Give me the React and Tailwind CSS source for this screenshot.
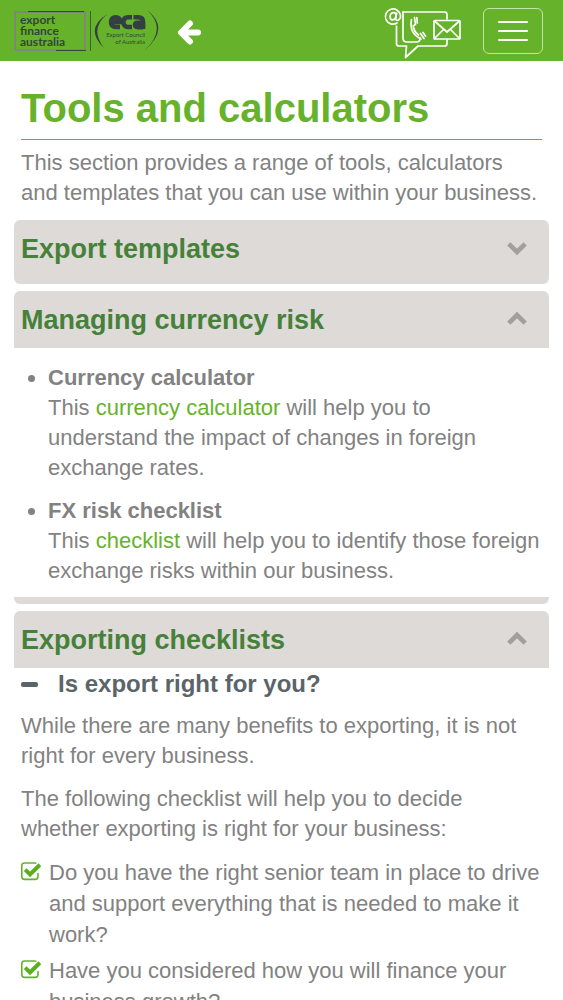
import React, { useState } from 'react'

const CHECKLIST = [
  'Do you have the right senior team in place to drive and support everything that is needed to make it work?',
  'Have you considered how you will finance your business growth?',
]

const ChevronIcon = ({ open }) => (
  <svg className="w-5 h-5 shrink-0" viewBox="0 0 20 20" fill="none" stroke="#a29f9c" strokeWidth="4.6" aria-hidden="true">
    <path d={open ? 'M1.8 13.200 10 5l8.200 8.200' : 'M1.8 4.800 10 13l8.200-8.200'} />
  </svg>
)

const CheckIcon = () => (
  <svg className="w-5 h-5 mt-[5px] shrink-0" viewBox="0 0 20 20" fill="none" aria-hidden="true">
    <path d="M15.5 1.4Q14.8 1 13.8 1H3.6Q.8 1 .8 3.6v11Q.8 17.400 3.600 17.400h10.600q2.800 0 2.800-2.800v-3.600" stroke="#66b32b" strokeWidth="1.6" />
    <path d="m4.200 7.600 4.800 4.800 9.900-9.600" stroke="#5aaf1e" strokeWidth="4" />
  </svg>
)

const ContactIcon = () => (
  <svg className="w-[90px] h-[60px]" viewBox="0 -3 90 60" fill="none" stroke="white" strokeWidth="1.7" strokeLinejoin="round" strokeLinecap="round" aria-hidden="true">
    {/* at sign */}
    <path d="M17 19a7.600 7.600 0 1 1 3.500-7.500c.2 3-1.500 5-3.300 4.800-1.400-.2-1.700-1.400-1.400-2.800l.9-4.500" />
    <path d="M15.900 12.300c.4-2.200-.6-3.600-2.300-3.600-2.100 0-3.500 1.800-3.500 4.100 0 1.900 1 3.100 2.400 3.100 1.800 0 3.100-1.400 3.400-3.600z" />
    {/* speech bubble */}
    <path d="M23 8h41.500q2.500 0 2.500 2.500V15M67 36v3.500q0 2.500-2.500 2.500H38L25.500 53.500 26.500 42H19q-2.500 0-2.500-2.500V22" />
    {/* phone */}
    <path d="M23 8v26q0 4 4 4h9.500q3.500 0 3.500-3.500v-1" />
    <path d="M31.500 15.500c-1.500 8 1 15.500 9.500 19.500M34.500 13.500l1 7M36.800 13.500l.5 5.500M40.500 29.500l3.500 5M43 28.500l2.500 3.500M34.500 21l-1.300 1c.6 3.800 2.500 7 5.300 9" />
    {/* envelope */}
    <rect x="54" y="16.5" width="26" height="18.500" rx="1" />
    <path d="m54.500 17 12.500 11 12.500-11M54.500 34.500l9-9M79.500 34.500l-9-9" />
  </svg>
)

const Logos = () => (
  <a href="#home" className="flex items-center text-[#35443a]">
    <span className="relative block w-18 h-10 border-2 border-[#7d8a72] pl-1 pt-px font-['Lato'] text-xs leading-[11px] font-bold">
      export<br />finance<br />australia
      <span className="absolute -top-0.5 left-3 right-0 h-px bg-[#35443a]" />
      <span className="absolute -bottom-0.5 left-10 -right-0.5 h-px bg-[#35443a]" />
    </span>
    <span className="ml-1 h-10 w-px bg-[#35633a]" />
    <svg className="ml-[3px] w-[66px] h-[45px]" viewBox="0 0 66 45" fill="#333f42" aria-label="Export Council of Australia">
      <path d="M13.500 6Q-10 20.500 10 40 -5 20.500 13.500 6zM53 2q21 19-3 41Q77 20.500 53 2z" />
      <g fill="none" stroke="#333f42" strokeWidth="4.4">
        <path d="M17 14h9.500q-.5-4.800-4.800-4.800T17 14q0 5 5 5h4" />
        <path d="M38 9.200h-4q-4.500 0-4.500 4.900t4.500 4.900h4" />
        <path d="M39.500 9.200h4.500q5.200 0 5.200 5V21M49 14.800h-5q-3 0-3 2.200t3 2.200h5" />
      </g>
      <text x="51" y="29" textAnchor="end" fontSize="6" fontFamily="Lato">Export Council</text>
      <text x="51" y="36" textAnchor="end" fontSize="6" fontFamily="Lato">of Australia</text>
    </svg>
  </a>
)

const Panel = ({ title, defaultOpen = false, children }) => {
  const [open, setOpen] = useState(defaultOpen)
  return (
    <section className="rounded-md bg-[#dedad7] pb-[7px]">
      <h2>
        <button
          type="button"
          aria-expanded={open}
          onClick={() => setOpen(!open)}
          className="flex w-full h-[57px] items-center justify-between pl-[7px] pr-[22px] text-left text-[27px] font-bold text-[#46813a]"
        >
          {title}
          <ChevronIcon open={open} />
        </button>
      </h2>
      {open && <div className="bg-white px-[7px]">{children}</div>}
    </section>
  )
}

const App = () => {
  return (
    <div className="min-h-screen bg-white font-['Liberation_Sans',Arial,sans-serif] text-[22px] leading-[30px] text-[#828282]">
      <header className="flex h-[61px] items-center bg-[#66b32b] pl-3.5 pr-5">
        <Logos />
        <a href="#back" aria-label="Back" className="ml-[15px]">
          <svg className="w-7 h-7" viewBox="0 0 28 28" fill="none" stroke="white" strokeWidth="6" strokeLinecap="round" strokeLinejoin="round" aria-hidden="true">
            <path d="M15 6.500 6 15.500l9 9M8 15.500h15" />
          </svg>
        </a>
        <a href="#contact" aria-label="Contact us" className="ml-auto">
          <ContactIcon />
        </a>
        <button type="button" aria-label="Menu" className="ml-[13px] flex h-[46px] w-15 flex-col items-center justify-center gap-[7px] rounded-md border border-[#c5e2ac]">
          <span className="h-0.5 w-[30px] rounded bg-white" />
          <span className="h-0.5 w-[30px] rounded bg-white" />
          <span className="h-0.5 w-[30px] rounded bg-white" />
        </button>
      </header>

      <main className="px-3.5">
        <div className="px-[7px]">
          <h1 className="pt-6 pb-[7px] text-[40px] leading-[47px] font-bold text-[#66b32b]">
            Tools and calculators
          </h1>
          <hr className="h-px border-0 bg-[#66b32b]" />
          <p className="pt-2 pb-3">
            This section provides a range of tools, calculators and templates that you can use within your business.
          </p>
        </div>

        <div className="flex flex-col gap-[7px]">
          <Panel title="Export templates" />

          <Panel title="Managing currency risk" defaultOpen>
            <ul className="flex list-disc flex-col gap-[13px] pt-[15px] pb-[11px] pl-[27px]">
              <li>
                <strong>Currency calculator</strong>
                <br />
                This <a href="#currency" className="text-[#66b32b]">currency calculator</a> will help you to understand the impact of changes in foreign exchange rates.
              </li>
              <li>
                <strong>FX risk checklist</strong>
                <br />
                This <a href="#checklist" className="text-[#66b32b]">checklist</a> will help you to identify those foreign exchange risks within our business.
              </li>
            </ul>
          </Panel>

          <Panel title="Exporting checklists" defaultOpen>
            <h3>
              <button type="button" className="flex items-center pt-px text-2xl leading-[30px] font-bold text-[#5b6569]">
                <span className="mr-5 h-[5px] w-[17px] rounded-xs bg-[#5b6569]" />
                Is export right for you?
              </button>
            </h3>
            <p className="mt-3">
              While there are many benefits to exporting, it is not right for every business.
            </p>
            <p className="mt-[13px]">
              The following checklist will help you to decide whether exporting is right for your business:
            </p>
            <ul className="mt-[13px] flex flex-col gap-[5px] leading-[31px]">
              {CHECKLIST.map((item) => (
                <li key={item} className="flex gap-2">
                  <CheckIcon />
                  <span>{item}</span>
                </li>
              ))}
            </ul>
          </Panel>
        </div>
      </main>
    </div>
  )
}

export default App
